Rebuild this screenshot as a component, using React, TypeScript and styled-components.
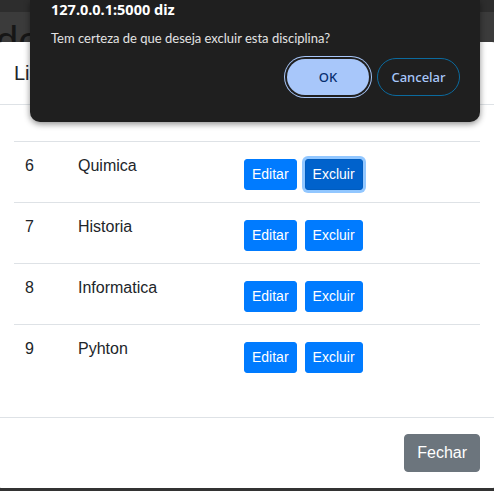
import styled, { createGlobalStyle } from "styled-components";

const GlobalStyle = createGlobalStyle`
  html, body {
    margin: 0;
    padding: 0;
    width: 494px;
    height: 491px;
    overflow: hidden;
    background: #333333;
  }
  body {
    font-family: "Liberation Sans", Arial, sans-serif;
  }
`;

const Page = styled.div`
  position: relative;
  width: 494px;
  height: 491px;
  overflow: hidden;
  background: #333333;
`;

const TopStrip = styled.div`
  height: 12px;
  background: #2d2d2d;
`;

const PageHeading = styled.div`
  height: 30px;
  background: #3b3b3b;
  overflow: hidden;
  font-size: 40px;
  line-height: 58px;
  color: #161616;
  text-indent: -4px;
`;

const Modal = styled.div`
  position: absolute;
  top: 42px;
  left: -2px;
  width: 498px;
  height: 446px;
  background: #ffffff;
  display: flex;
  flex-direction: column;
  border-radius: 4px;
  color: #212529;
`;

const ModalHeader = styled.div`
  padding: 16px;
  border-bottom: 1px solid #dee2e6;
`;

const ModalTitle = styled.h5`
  margin: 0;
  font-size: 20px;
  font-weight: 500;
  line-height: 30px;
`;

const ModalBody = styled.div`
  flex: 1;
  padding: 36px 16px 16px;
`;

const Table = styled.table`
  width: 466px;
  table-layout: fixed;
  border-collapse: collapse;
  font-size: 16px;
`;

const Row = styled.tr`
  border-top: 1px solid #dee2e6;
`;

const Cell = styled.td<{ $w?: number }>`
  box-sizing: border-box;
  padding: 12px 11px;
  vertical-align: top;
  line-height: 24px;
  width: ${(p) => (p.$w ? `${p.$w}px` : "auto")};
`;

const ActionButton = styled.button<{ $focused?: boolean }>`
  font-family: "Liberation Sans", Arial, sans-serif;
  font-size: 14px;
  line-height: 21px;
  padding: 4px 7px;
  margin-top: 5px;
  margin-right: 8px;
  border-radius: 3px;
  border: 1px solid ${(p) => (p.$focused ? "#005cbf" : "#007bff")};
  background: ${(p) => (p.$focused ? "#0062cc" : "#007bff")};
  color: #ffffff;
  box-shadow: ${(p) => (p.$focused ? "0 0 0 3px rgba(38, 143, 255, 0.5)" : "none")};
  cursor: pointer;
`;

const ModalFooter = styled.div`
  display: flex;
  justify-content: flex-end;
  padding: 12px;
  border-top: 1px solid #dee2e6;
`;

const CloseButton = styled.button`
  font-family: "Liberation Sans", Arial, sans-serif;
  margin: 4px;
  font-size: 16px;
  line-height: 24px;
  padding: 6px 12px;
  border-radius: 4px;
  border: 1px solid #6c757d;
  background: #6c757d;
  color: #ffffff;
`;

const Dialog = styled.div`
  position: absolute;
  top: 0;
  left: 30px;
  width: 450px;
  height: 122px;
  box-sizing: border-box;
  background: #1f1f1f;
  border-radius: 0 0 10px 10px;
  box-shadow: 0 2px 6px rgba(0, 0, 0, 0.45);
  padding: 0 20px 0 21px;
  font-family: "Noto Sans", "Open Sans", sans-serif;
  color: #e3e3e3;
`;

const DialogTitle = styled.div`
  font-size: 14.5px;
  font-weight: 700;
  line-height: 18px;
  margin-top: 0;
  color: #ffffff;
`;

const DialogMessage = styled.div`
  font-family: Lato, "Noto Sans", sans-serif;
  font-size: 13px;
  line-height: 18px;
  margin-top: 11px;
`;

const DialogActions = styled.div`
  display: flex;
  justify-content: flex-end;
  align-items: center;
  gap: 5px;
  margin-top: 11px;
`;

const PillButton = styled.button<{ $primary?: boolean }>`
  font-family: "Noto Sans", "Open Sans", sans-serif;
  font-size: 13px;
  height: ${(p) => (p.$primary ? "36px" : "38px")};
  padding: 0;
  width: ${(p) => (p.$primary ? "82px" : "83px")};
  border-radius: 19px;
  border: ${(p) => (p.$primary ? "none" : "1px solid #0b6a9e")};
  background: ${(p) => (p.$primary ? "#a8c7fa" : "transparent")};
  color: ${(p) => (p.$primary ? "#062e6f" : "#a8c7fa")};
  font-weight: 500;
  margin: ${(p) => (p.$primary ? "0 3px" : "0")};
  box-shadow: ${(p) =>
    p.$primary ? "0 0 0 2px #1f1f1f, 0 0 0 3px #a8c7fa" : "none"};
`;

const disciplinas = [
  { id: 6, nome: "Quimica" },
  { id: 7, nome: "Historia" },
  { id: 8, nome: "Informatica" },
  { id: 9, nome: "Pyhton" },
];

function App() {
  return (
    <Page>
      <GlobalStyle />
      <TopStrip />
      <PageHeading>de</PageHeading>
      <Modal>
        <ModalHeader>
          <ModalTitle>Lista de Disciplinas</ModalTitle>
        </ModalHeader>
        <ModalBody>
          <Table>
            <tbody>
              {disciplinas.map((d, i) => (
                <Row key={d.id}>
                  <Cell $w={53}>{d.id}</Cell>
                  <Cell $w={166}>{d.nome}</Cell>
                  <Cell $w={247}>
                    <ActionButton>Editar</ActionButton>
                    <ActionButton $focused={i === 0}>Excluir</ActionButton>
                  </Cell>
                </Row>
              ))}
            </tbody>
          </Table>
        </ModalBody>
        <ModalFooter>
          <CloseButton>Fechar</CloseButton>
        </ModalFooter>
      </Modal>
      <Dialog>
        <DialogTitle>127.0.0.1:5000 diz</DialogTitle>
        <DialogMessage>Tem certeza de que deseja excluir esta disciplina?</DialogMessage>
        <DialogActions>
          <PillButton $primary>OK</PillButton>
          <PillButton>Cancelar</PillButton>
        </DialogActions>
      </Dialog>
    </Page>
  );
}

export default App;
